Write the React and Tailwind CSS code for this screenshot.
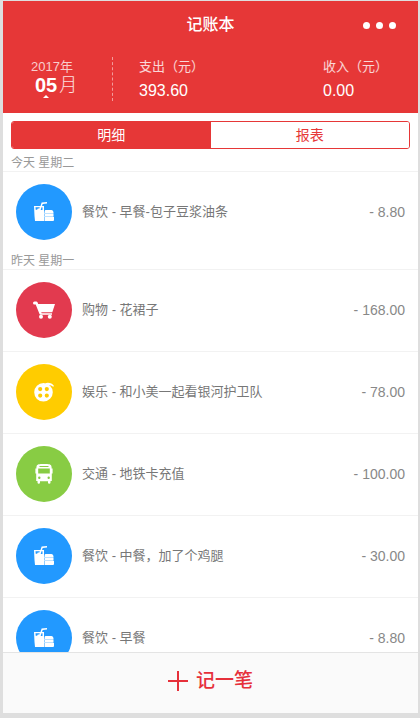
import { useState } from "react";

const FoodIcon = () => (
  <svg viewBox="0 0 20 20" className="w-5 h-5" fill="currentColor" aria-hidden="true">
    <path fillRule="evenodd" d="M0 4h6.500l1.100-3.600L13 0v1.400l-4.300.5L8 4h2v15H1L.5 14 0 4Zm1.500 1.300.2 2.500h1.400l.7-1.300h1.500l.5-1.200H1.500Zm6 0L6.700 8h1.800V5.300h-1Z" />
    <path d="M11.500 8h6q2 0 2 2.500v.5H10.500v-.8Q10.500 8 11.500 8ZM10.500 12h9v2h-9zM10.500 15H20v3q0 1-1 1h-8.500z" />
    <path d="M10 11h9.500v1H10zM10 14h9.500v1H10z" opacity=".7" />
  </svg>
);

const CartIcon = () => (
  <svg viewBox="0 0 24 18" className="w-6 h-[18px]" fill="currentColor" aria-hidden="true">
    <path d="M2.500.500h1.800q.8 0 1.200.8L6.200 3H23l-2.700 8.300H9.200l.5 1H20v1.500H8.700q-.9 0-1.200-.8L3.700 3.500H2.500a1.500 1.500 0 0 1 0-3Z" />
    <circle cx="9" cy="15.800" r="2" />
    <circle cx="17.800" cy="15.800" r="2" />
  </svg>
);

const FilmIcon = () => (
  <svg viewBox="0 0 20 20" className="w-5 h-5" fill="currentColor" aria-hidden="true">
    <path fillRule="evenodd" d="M9.500 1a9.300 9.300 0 1 0 0 18.600A9.300 9.300 0 0 0 9.500 1ZM6.200 5a2.100 2.100 0 1 1 0 4.200 2.100 2.100 0 0 1 0-4.200Zm6.600 0a2.100 2.100 0 1 1 0 4.200 2.100 2.100 0 0 1 0-4.200Zm-6.600 6.500a2.100 2.100 0 1 1 0 4.200 2.100 2.100 0 0 1 0-4.200Zm6.600 0a2.100 2.100 0 1 1 0 4.200 2.100 2.100 0 0 1 0-4.200Z" />
    <path d="M11 1.200q6-1.400 9 2.800l-.8.800Q17 2.600 14 3Z" />
  </svg>
);

const BusIcon = () => (
  <svg viewBox="0 0 18 20" className="w-[18px] h-5" fill="currentColor" aria-hidden="true">
    <path fillRule="evenodd" d="M3.500.3Q9-.6 14.500.3 16.600.8 16.600 3v1.500h1v5h-.8v7.500h-1.300v1.500q0 1.300-1.300 1.300T13 18.500V17.300H5v1.200q0 1.300-1.200 1.300t-1.300-1.300V17H1.200V9.500H.4v-5h1V3q0-2.200 2.100-2.700ZM4.500 2v1h9V2h-9ZM3.200 4.500v5h11.600v-5H3.200ZM4.300 12.500a1.200 1.200 0 1 0 0 2.400 1.200 1.200 0 0 0 0-2.400Zm9.400 0a1.200 1.200 0 1 0 0 2.400 1.200 1.200 0 0 0 0-2.400Z" />
  </svg>
);

const CATEGORIES = {
  food:      { label: "餐饮", bg: "bg-[#2299ff]", Icon: FoodIcon },
  shopping:  { label: "购物", bg: "bg-[#e23a4f]", Icon: CartIcon },
  fun:       { label: "娱乐", bg: "bg-[#ffcc00]", Icon: FilmIcon },
  transport: { label: "交通", bg: "bg-[#88cc44]", Icon: BusIcon },
};

const DAYS = [
  {
    title: "今天 星期二",
    items: [{ id: 1, category: "food", note: "早餐-包子豆浆油条", amount: 8.8 }],
  },
  {
    title: "昨天 星期一",
    items: [
      { id: 2, category: "shopping", note: "花裙子", amount: 168 },
      { id: 3, category: "fun", note: "和小美一起看银河护卫队", amount: 78 },
      { id: 4, category: "transport", note: "地铁卡充值", amount: 100 },
      { id: 5, category: "food", note: "中餐，加了个鸡腿", amount: 30 },
      { id: 6, category: "food", note: "早餐", amount: 8.8 },
    ],
  },
];

const TABS = [
  { value: "detail", label: "明细" },
  { value: "report", label: "报表" },
];

const Record = ({ category, note, amount }) => {
  const { label, bg, Icon } = CATEGORIES[category];
  return (
    <li className="flex items-center gap-2.5 border-t border-[#f2f2f2] pt-3 pb-[13px] px-[13px]">
      <span className={`flex items-center justify-center w-14 h-14 shrink-0 rounded-full text-white ${bg}`}>
        <Icon />
      </span>
      <span className="flex-1 min-w-0 truncate text-[13px] text-[#777]">{label} - {note}</span>
      <span className="text-sm text-[#888]">- {amount.toFixed(2)}</span>
    </li>
  );
};

const App = () => {
  const [tab, setTab] = useState("detail");

  return (
    <div className="h-screen bg-[#dedede] pt-px pb-[5px] pl-[3px] pr-0.5 font-['Liberation_Sans','Noto_Sans_CJK_SC',sans-serif]">
      <div className="flex flex-col h-full bg-white">

        {/* Header */}
        <header className="shrink-0 bg-[#e63737] text-white pb-2">
          <div className="grid grid-cols-[1fr_auto_1fr] items-center h-12 px-[22px]">
            <h1 className="col-start-2 text-base font-medium">记账本</h1>
            <button aria-label="更多" className="justify-self-end flex gap-1.5 py-2">
              <span className="w-[7px] h-[7px] rounded-full bg-white" />
              <span className="w-[7px] h-[7px] rounded-full bg-white" />
              <span className="w-[7px] h-[7px] rounded-full bg-white" />
            </button>
          </div>

          <div className="flex items-start pt-2">
            <button className="flex flex-col items-start w-[109px] pt-0.5 pl-7">
              <span className="text-[13px] leading-4 text-white/75">2017年</span>
              <span className="flex items-center gap-0.5 pl-1 text-xl leading-5">
                <b>05</b>
                <span className="text-lg leading-5 font-light text-white/85">月</span>
              </span>
              <svg viewBox="0 0 6 3" className="w-1.5 h-[3px] ml-3" fill="currentColor" aria-hidden="true">
                <path d="M3 0 6 3H0z" />
              </svg>
            </button>
            <div className="h-11 border-l border-dashed border-white/50" />
            <dl className="flex flex-1 justify-between pl-[26px] pr-[30px]">
              <div>
                <dt className="text-[13px] leading-5 text-white/80">支出（元）</dt>
                <dd className="text-base leading-7">393.60</dd>
              </div>
              <div>
                <dt className="text-[13px] leading-5 text-white/80">收入（元）</dt>
                <dd className="text-base leading-7">0.00</dd>
              </div>
            </dl>
          </div>
        </header>

        {/* Tabs */}
        <div role="tablist" className="flex shrink-0 h-7 mx-2 mt-2 mb-1.5 rounded-[3px] border border-[#e63737] overflow-hidden">
          {TABS.map(({ value, label }) => (
            <button key={value} role="tab" aria-selected={tab === value} onClick={() => setTab(value)}
              className={`flex-1 text-sm ${tab === value ? "bg-[#e63737] text-white" : "bg-white text-[#e63737]"}`}>
              {label}
            </button>
          ))}
        </div>

        {/* Records by day */}
        <main className="flex-1 min-h-0 overflow-hidden">
          {DAYS.map(({ title, items }) => (
            <section key={title}>
              <h2 className="px-2 text-xs leading-4 text-[#999]">{title}</h2>
              <ul>
                {items.map(item => <Record key={item.id} {...item} />)}
              </ul>
            </section>
          ))}
        </main>

        {/* Add record */}
        <button className="flex items-center justify-center gap-2 shrink-0 h-[61px] pb-1 border-t border-[#e4e4e4] bg-[#fafafa] text-[#e6303a] text-[19px] font-medium">
          <svg viewBox="0 0 20 20" className="w-5 h-5" fill="none" stroke="currentColor" strokeWidth="2" aria-hidden="true">
            <path d="M10 0v20M0 10h20" />
          </svg>
          记一笔
        </button>
      </div>
    </div>
  );
};

export default App;
